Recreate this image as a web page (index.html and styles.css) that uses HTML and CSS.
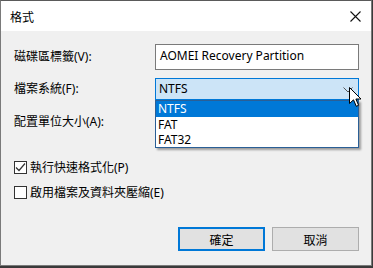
FILE: index.html
```html
<!DOCTYPE html>
<html lang="zh-Hant">

<head>
  <meta charset="UTF-8">
  <title>格式</title>
  <link rel="stylesheet" href="styles.css">
</head>

<body>
  <div class="window">
    <div class="titlebar">
      <span class="title">格式</span>
      <svg class="close" width="11" height="11" viewBox="0 0 11 11">
        <path d="M0.5 0.5 L10.5 10.5 M10.5 0.5 L0.5 10.5" stroke="#111" stroke-width="1.1" />
      </svg>
    </div>

    <div class="content">
      <div class="field-row row-label">
        <label>磁碟區標籤(V):</label>
        <div class="textbox">AOMEI Recovery Partition</div>
      </div>

      <div class="field-row row-fs">
        <label>檔案系統(F):</label>
        <div class="combo">
          <span>NTFS</span>
          <svg class="chevron" width="10" height="6" viewBox="0 0 10 6">
            <path d="M0.5 0.5 L5 5 L9.5 0.5" stroke="#555" stroke-width="1" fill="none" />
          </svg>
          <ul class="dropdown">
            <li class="selected">NTFS</li>
            <li>FAT</li>
            <li>FAT32</li>
          </ul>
          <!-- mouse pointer sitting on the arrow -->
          <svg class="cursor" width="13" height="21" viewBox="0 0 13 21">
            <path d="M0.5 0.5 L0.5 16.5 L4.5 12.8 L7.3 19.3 L9.6 18.3 L6.9 12 L12 12 Z" fill="#fff" stroke="#000" stroke-width="1" stroke-linejoin="round" />
          </svg>
        </div>
      </div>

      <div class="field-row row-unit">
        <label>配置單位大小(A):</label>
      </div>

      <div class="check-row check-quick">
        <span class="checkbox">
          <svg width="11" height="11" viewBox="0 0 11 11">
            <path d="M1 5.5 L4 8.5 L10 1.5" stroke="#333" stroke-width="1.2" fill="none" />
          </svg>
        </span>
        <span>執行快速格式化(P)</span>
      </div>

      <div class="check-row check-compress">
        <span class="checkbox"></span>
        <span>啟用檔案及資料夾壓縮(E)</span>
      </div>

      <div class="buttons">
        <button class="btn btn-default">確定</button>
        <button class="btn">取消</button>
      </div>
    </div>
  </div>
</body>

</html>
```

FILE: styles.css
```css
* {
  margin: 0;
  padding: 0;
  box-sizing: border-box;
}

body {
  background: #3a3a3a;
  width: 373px;
  height: 268px;
  overflow: hidden;
  font-family: 'Noto Sans', 'Noto Sans CJK TC', sans-serif;
  font-size: 12px;
  color: #000;
}

.window {
  width: 372px;
  height: 266px;
  background: #f0f0f0;
  border: 1px solid #7a7a7a;
  border-top-color: #5a5a5a;
}

.titlebar {
  height: 30px;
  background: #fff;
  display: flex;
  align-items: center;
  justify-content: space-between;
  padding: 0 8px 0 9px;
}

.title {
  font-family: 'Noto Sans CJK TC', sans-serif;
  font-size: 12px;
}

.close {
  margin-right: 2px;
}

.content {
  padding: 13px 12px 0 13px;
}

.field-row {
  display: flex;
  align-items: center;
}

.field-row label {
  width: 141px;
  line-height: 16px;
}

.row-label {
  height: 26px;
}

.row-fs {
  height: 22px;
  margin-top: 8px;
}

.row-unit {
  height: 22px;
  margin-top: 11px;
}

.textbox {
  width: 204px;
  height: 26px;
  border: 1px solid #7a7a7a;
  background: #fff;
  padding: 3px 0 0 4px;
  line-height: 16px;
}

.combo {
  position: relative;
  width: 204px;
  height: 22px;
  border: 1px solid #0078d7;
  background: #cce4f7;
  padding: 2px 0 0 3px;
  line-height: 16px;
}

.chevron {
  position: absolute;
  right: 5px;
  top: 8px;
}

.dropdown {
  position: absolute;
  left: -1px;
  top: 21px;
  width: 204px;
  height: 48px;
  list-style: none;
  background: #fff;
  border: 1px solid #2a5f96;
  box-shadow: 2px 2px 2px rgba(0, 0, 0, 0.35);
  z-index: 5;
}

.dropdown li {
  height: 15px;
  line-height: 15px;
  padding-left: 2px;
}

.dropdown li.selected {
  height: 16px;
  background: #0078d7;
  color: #fff;
}

.cursor {
  position: absolute;
  right: -4px;
  top: 8px;
  z-index: 10;
}

.check-row {
  display: flex;
  align-items: center;
  gap: 3px;
  height: 13px;
  line-height: 16px;
}

.check-quick {
  margin-top: 28px;
}

.check-compress {
  margin-top: 12px;
}

.checkbox {
  width: 13px;
  height: 13px;
  border: 1px solid #333;
  background: #fff;
  display: flex;
  align-items: center;
  justify-content: center;
}

.buttons {
  display: flex;
  justify-content: flex-end;
  gap: 7px;
  margin-top: 28px;
}

.btn {
  width: 87px;
  height: 24px;
  background: #e1e1e1;
  border: 1px solid #adadad;
  font-family: 'Noto Sans CJK TC', sans-serif;
  font-size: 12px;
  color: #000;
}

.btn-default {
  border: 2px solid #0078d7;
}
```
